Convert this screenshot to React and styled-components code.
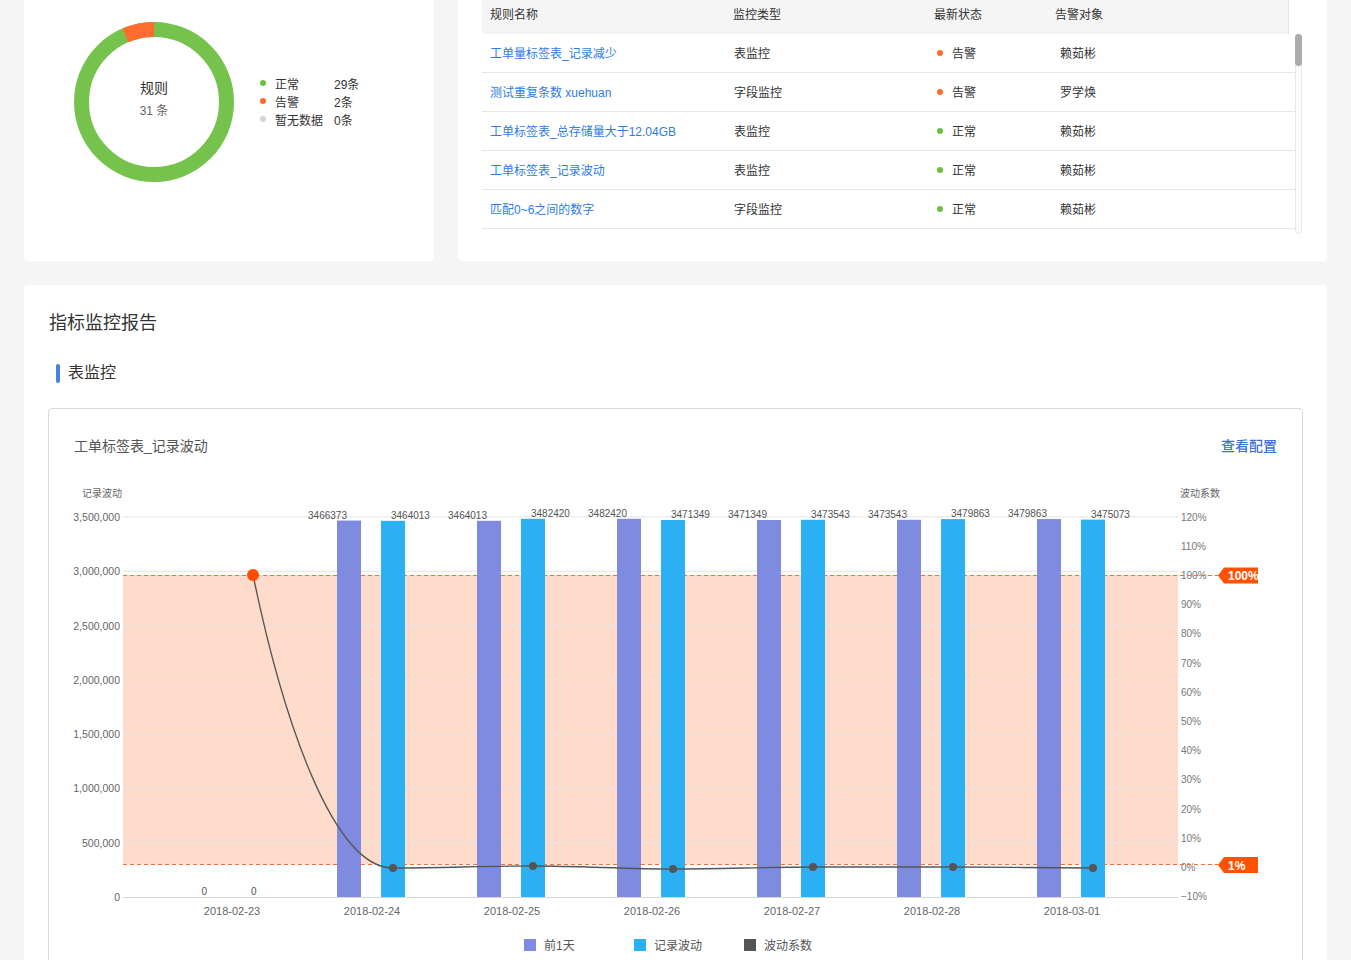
import React from "react";
import styled, { createGlobalStyle } from "styled-components";

const FONT = `"Liberation Sans", "Noto Sans CJK SC", sans-serif`;

const GlobalStyle = createGlobalStyle`
  html, body { margin: 0; padding: 0; background: #f5f5f5; }
  body { font-family: ${FONT}; color: #333; overflow: hidden; }
  * { box-sizing: border-box; }
`;

const Page = styled.div`
  padding: 0 24px;
  width: 1351px;
`;

const TopRow = styled.div`
  display: grid;
  grid-template-columns: 410px 1fr;
  gap: 24px;
  margin-top: -20px;
`;

const Card = styled.div`
  background: #fff;
  border-radius: 4px;
  height: ${(p) => p.$h || "auto"};
`;

const DonutPanel = styled.div`
  display: flex;
  align-items: center;
  padding: 42px 0 0 50px;
`;

const DonutWrap = styled.div`
  position: relative;
  width: 160px;
  height: 160px;
  flex: none;
`;

const DonutCenter = styled.div`
  position: absolute;
  inset: 0;
  display: flex;
  flex-direction: column;
  align-items: center;
  justify-content: center;
  padding-bottom: 6px;
`;

const CenterTitle = styled.div`
  font-size: 14px;
  line-height: 20px;
  color: #333;
`;

const CenterSub = styled.div`
  font-size: 12px;
  line-height: 18px;
  margin-top: 4px;
  color: #666;
`;

const Legend = styled.div`
  margin-left: 26px;
  margin-top: -2px;
  display: flex;
  flex-direction: column;
`;

const LegendRow = styled.div`
  display: flex;
  align-items: center;
  height: 18px;
  font-size: 12px;
  color: #333;
`;

const Dot = styled.span`
  width: 6px;
  height: 6px;
  border-radius: 50%;
  background: ${(p) => p.$c};
  margin-right: 9px;
  flex: none;
`;

const LegendLabel = styled.span`
  width: 59px;
`;

const TablePanel = styled.div`
  padding: 14px 25px 0 24px;
`;

const TableWrap = styled.div`
  width: 820px;
`;

const HeadRow = styled.div`
  display: grid;
  grid-template-columns: 243px 201px 121px 1fr;
  width: 807px;
  height: 40px;
  padding-bottom: 1px;
  align-items: center;
  background: #f5f5f5;
  border-right: 1px solid #e6e6e6;
  font-size: 12px;
  color: #333;
`;

const HeadCell = styled.div`
  padding-left: 8px;
`;

const Body = styled.div`
  display: flex;
  align-items: flex-start;
`;

const Rows = styled.div`
  width: 813px;
`;

const Row = styled.div`
  display: grid;
  grid-template-columns: 243px 201px 121px 1fr;
  height: 39px;
  padding-bottom: 1px;
  align-items: center;
  border-bottom: 1px solid #e6e6e6;
  font-size: 12px;
  color: #333;
`;

const Cell = styled.div`
  padding-left: ${(p) => p.$pl || 8}px;
  display: flex;
  align-items: center;
  white-space: nowrap;
`;

const LinkText = styled.a`
  color: #2e7be6;
  text-decoration: none;
  cursor: pointer;
`;

const Track = styled.div`
  width: 7px;
  height: 200px;
  border: 1px solid #e8e8e8;
  border-radius: 4px;
  background: #fbfbfb;
  flex: none;
`;

const Thumb = styled.div`
  width: 7px;
  height: 32px;
  margin-left: -1px;
  margin-top: -1px;
  border-radius: 4px;
  background: #ababab;
`;

const ReportCard = styled(Card)`
  margin-top: 24px;
  padding: 26px 24px 40px;
`;

const ReportTitle = styled.h2`
  margin: 0;
  padding-left: 1px;
  font-size: 18px;
  line-height: 24px;
  font-weight: 400;
  color: #333;
`;

const SubTitle = styled.div`
  display: flex;
  align-items: center;
  gap: 8px;
  margin-top: 28px;
  padding-left: 8px;
  font-size: 16px;
  line-height: 20px;
  color: #333;
`;

const SubBar = styled.span`
  width: 4px;
  height: 19px;
  border-radius: 2px;
  background: #4a7fe3;
`;

const ChartBox = styled.div`
  margin-top: 25px;
  border: 1px solid #d9d9d9;
  border-radius: 4px;
  height: 620px;
`;

const ChartHead = styled.div`
  display: flex;
  justify-content: space-between;
  align-items: center;
  padding: 27px 25px 0 25px;
  height: 46px;
  font-size: 14px;
  line-height: 18px;
`;

const ChartTitle = styled.span`
  color: #555;
`;

const ConfigLink = styled.a`
  color: #3f6fdb;
  font-weight: 500;
  cursor: pointer;
`;

const ChartSvg = styled.svg`
  display: block;
`;

const rules = [
  { name: "工单量标签表_记录减少", type: "表监控", warn: true, who: "赖茹彬" },
  { name: "测试重复条数 xuehuan", type: "字段监控", warn: true, who: "罗学焕" },
  { name: "工单标签表_总存储量大于12.04GB", type: "表监控", warn: false, who: "赖茹彬" },
  { name: "工单标签表_记录波动", type: "表监控", warn: false, who: "赖茹彬" },
  { name: "匹配0~6之间的数字", type: "字段监控", warn: false, who: "赖茹彬" },
];

const GREEN = "#6cbd45";
const ORANGE = "#ff6a2c";

function Donut() {
  return (
    <DonutWrap>
      <svg width="160" height="160" viewBox="0 0 160 160">
        <circle cx="80" cy="80" r="72.5" fill="none" stroke="#75c24c" strokeWidth="15" />
        <path
          d="M80,0 A80,80 0 0 0 48.45,6.48 L54.36,20.26 A65,65 0 0 1 80,15 Z"
          fill="#ff6d2e"
        />
      </svg>
      <DonutCenter>
        <CenterTitle>规则</CenterTitle>
        <CenterSub>31 条</CenterSub>
      </DonutCenter>
    </DonutWrap>
  );
}

const cx = (i) => 232 + 140 * i;
const yL = (v) => 897 - (v * 54.3) / 500000;
const yR = (p) => 867 - p * 2.92;

const bars = [
  [0, 0],
  [3466373, 3464013],
  [3464013, 3482420],
  [3482420, 3471349],
  [3471349, 3473543],
  [3473543, 3479863],
  [3479863, 3475073],
];
const dates = ["2018-02-23", "2018-02-24", "2018-02-25", "2018-02-26", "2018-02-27", "2018-02-28", "2018-03-01"];
const lineY = [575, 868, 866, 869, 867, 867, 868];

const leftTicks = [
  [0, "0"],
  [500000, "500,000"],
  [1000000, "1,000,000"],
  [1500000, "1,500,000"],
  [2000000, "2,000,000"],
  [2500000, "2,500,000"],
  [3000000, "3,000,000"],
  [3500000, "3,500,000"],
];
const rightTicks = [-10, 0, 10, 20, 30, 40, 50, 60, 70, 80, 90, 100, 110, 120];

function Badge({ y, text }) {
  return (
    <g>
      <polygon
        points={`1218,${y} 1224,${y - 8} 1258,${y - 8} 1258,${y + 8} 1224,${y + 8}`}
        fill="#ff5100"
      />
      <text x="1228" y={y + 4.5} fill="#fff" fontSize="12" fontWeight="700">
        {text}
      </text>
    </g>
  );
}

function Chart() {
  const pts = bars.map((_, i) => [cx(i) + 21, lineY[i]]);
  let d = `M${pts[0][0]},${pts[0][1]} C${pts[0][0] + 30},720 ${pts[1][0] - 60},${pts[1][1]} ${pts[1][0]},${pts[1][1]}`;
  for (let i = 2; i < pts.length; i++) {
    const [x0, y0] = pts[i - 1];
    const [x1, y1] = pts[i];
    d += ` C${x0 + 50},${y0} ${x1 - 50},${y1} ${x1},${y1}`;
  }
  return (
    <ChartSvg width="1253" height="510" viewBox="49 455 1253 510" fontFamily={FONT}>
      <text x="82" y="497" fontSize="10" fill="#666">记录波动</text>
      <text x="1180" y="497" fontSize="10" fill="#666">波动系数</text>

      <rect x="123" y="575" width="1055" height="289" fill="#ff7a3d" fillOpacity="0.27" />

      {leftTicks.map(([v, t]) => (
        <g key={t}>
          {v > 0 && (
            <line x1="123" x2="1178" y1={yL(v)} y2={yL(v)} stroke="#e3e3e3" strokeWidth="1" />
          )}
          <text x="120" y={yL(v) + 4} fontSize="10.5" fill="#666" textAnchor="end">
            {t}
          </text>
        </g>
      ))}
      <line x1="123" x2="1178" y1="897.5" y2="897.5" stroke="#d6d6d6" strokeWidth="1" />

      {rightTicks.map((p) => (
        <text key={p} x="1181" y={yR(p) + 4} fontSize="10" fill="#777">
          {p < 0 ? `\u2212${-p}%` : `${p}%`}
        </text>
      ))}

      <line x1="123" x2="1218" y1="575.5" y2="575.5" stroke="#ff6a30" strokeDasharray="4 3" />
      <line x1="123" x2="1218" y1="864.5" y2="864.5" stroke="#ff6a30" strokeDasharray="4 3" />
      <Badge y={575.5} text="100%" />
      <Badge y={865} text="1%" />

      {bars.map(([a, b], i) => {
        const c = cx(i);
        return (
          <g key={i}>
            {a > 0 && <rect x={c - 35} y={yL(a)} width="24" height={897 - yL(a)} fill="#7f8ae1" />}
            {b > 0 && <rect x={c + 9} y={yL(b)} width="24" height={897 - yL(b)} fill="#2bb0f3" />}
            <text x={c - 25} y={yL(a) - 2} fontSize="10" fill="#555" textAnchor="end">
              {a}
            </text>
            <text x={c + 19} y={yL(b) - 2} fontSize="10" fill="#555">
              {b}
            </text>
            <text x={c} y="915" fontSize="11" fill="#666" textAnchor="middle">
              {dates[i]}
            </text>
          </g>
        );
      })}

      <path d={d} fill="none" stroke="#555" strokeWidth="1.3" />
      {pts.map(([x, y], i) =>
        i === 0 ? (
          <circle key={i} cx={x} cy={y} r="6" fill="#ff4d00" />
        ) : (
          <circle key={i} cx={x} cy={y} r="4" fill="#555" />
        )
      )}

      <rect x="524" y="939" width="12" height="12" fill="#7f8ae1" />
      <text x="544" y="949.5" fontSize="12" fill="#555">前1天</text>
      <rect x="634" y="939" width="12" height="12" fill="#2bb0f3" />
      <text x="654" y="949.5" fontSize="12" fill="#555">记录波动</text>
      <rect x="744" y="939" width="12" height="12" fill="#555" />
      <text x="764" y="949.5" fontSize="12" fill="#555">波动系数</text>
    </ChartSvg>
  );
}

export default function App() {
  return (
    <>
      <GlobalStyle />
      <Page>
        <TopRow>
          <Card $h="281px">
            <DonutPanel>
              <Donut />
              <Legend>
                <LegendRow>
                  <Dot $c={GREEN} />
                  <LegendLabel>正常</LegendLabel>
                  <span>29条</span>
                </LegendRow>
                <LegendRow>
                  <Dot $c={ORANGE} />
                  <LegendLabel>告警</LegendLabel>
                  <span>2条</span>
                </LegendRow>
                <LegendRow>
                  <Dot $c="#d6d6d6" />
                  <LegendLabel>暂无数据</LegendLabel>
                  <span>0条</span>
                </LegendRow>
              </Legend>
            </DonutPanel>
          </Card>
          <Card $h="281px">
            <TablePanel>
              <TableWrap>
                <HeadRow>
                  <HeadCell>规则名称</HeadCell>
                  <HeadCell>监控类型</HeadCell>
                  <HeadCell>最新状态</HeadCell>
                  <HeadCell>告警对象</HeadCell>
                </HeadRow>
                <Body>
                  <Rows>
                    {rules.map((r) => (
                      <Row key={r.name}>
                        <Cell>
                          <LinkText>{r.name}</LinkText>
                        </Cell>
                        <Cell $pl={9}>{r.type}</Cell>
                        <Cell $pl={11}>
                          <Dot $c={r.warn ? ORANGE : GREEN} />
                          {r.warn ? "告警" : "正常"}
                        </Cell>
                        <Cell $pl={13}>{r.who}</Cell>
                      </Row>
                    ))}
                  </Rows>
                  <Track>
                    <Thumb />
                  </Track>
                </Body>
              </TableWrap>
            </TablePanel>
          </Card>
        </TopRow>
        <ReportCard>
          <ReportTitle>指标监控报告</ReportTitle>
          <SubTitle>
            <SubBar />
            表监控
          </SubTitle>
          <ChartBox>
            <ChartHead>
              <ChartTitle>工单标签表_记录波动</ChartTitle>
              <ConfigLink>查看配置</ConfigLink>
            </ChartHead>
            <Chart />
          </ChartBox>
        </ReportCard>
      </Page>
    </>
  );
}
